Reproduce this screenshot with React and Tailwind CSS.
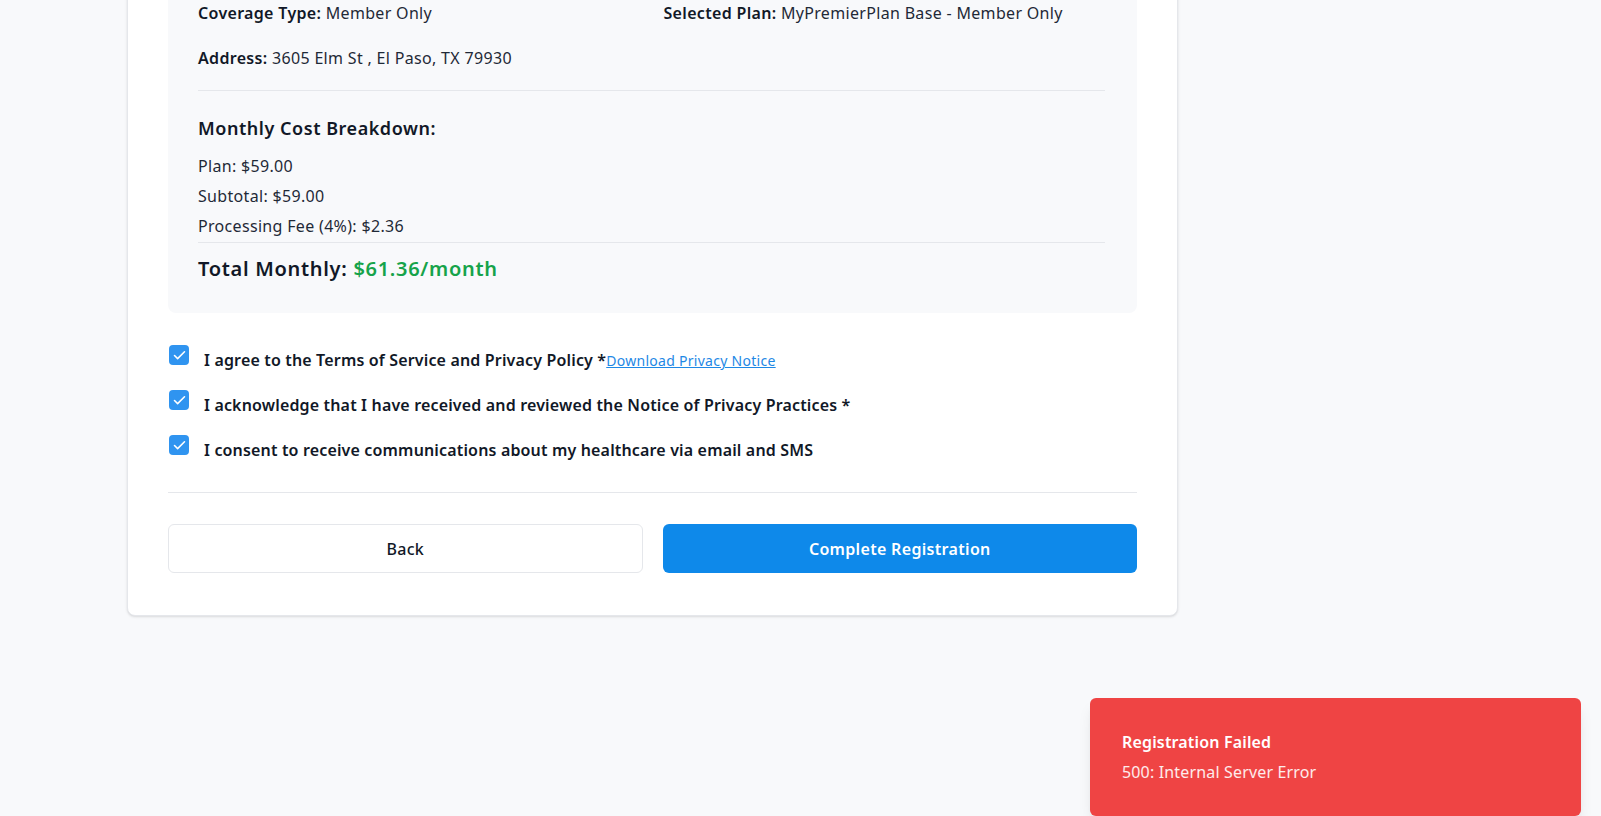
import { Check } from 'lucide-react'

const font = { fontFamily: '"Noto Sans", "Open Sans", Arial, sans-serif' }

function InfoRow({ label, value }) {
  return (
    <p className="leading-6 text-[#1f2937]">
      <span className="font-semibold text-[#111827]">{label}:</span> {value}
    </p>
  )
}

function Consent({ children }) {
  return (
    <label className="flex items-start gap-[15px]">
      <span className="ml-px flex h-5 w-5 shrink-0 items-center justify-center rounded-[4px] bg-[#2f94f0]">
        <Check size={15} strokeWidth={2.5} className="text-white" />
      </span>
      <span className="mt-[3px] leading-6 font-semibold tracking-[0.01em] text-[#111827]">{children}</span>
    </label>
  )
}

export default function App() {
  const costs = [
    { label: 'Plan', value: '$59.00' },
    { label: 'Subtotal', value: '$59.00' },
    { label: 'Processing Fee (4%)', value: '$2.36' },
  ]

  return (
    <div className="relative h-[816px] overflow-hidden bg-[#f8f9fb] text-base tracking-[0.02em]" style={font}>
      <div className="pl-[127px]">
        {/* Review card, scrolled so its top sits above the window */}
        <div className="-mt-[72px] w-[1051px] rounded-lg border border-gray-200 bg-white px-10 pt-10 pb-[42px] shadow-sm">
          <div className="rounded-lg bg-[#f8f9fb] pt-8 pr-8 pb-[30px] pl-[30px]">
            <div className="grid grid-cols-2 gap-x-6 gap-y-[21px]">
              <InfoRow label="Coverage Type" value="Member Only" />
              <InfoRow label="Selected Plan" value="MyPremierPlan Base - Member Only" />
              <InfoRow label="Address" value="3605 Elm St , El Paso, TX 79930" />
            </div>

            <div className="mt-5 border-t border-gray-200 pt-[23px]">
              <h3 className="mb-3 text-lg leading-7 font-semibold tracking-[0.03em] text-[#111827]">Monthly Cost Breakdown:</h3>
              <div className="space-y-1.5 text-[#1f2937]">
                {costs.map(c => (
                  <p key={c.label} className="leading-6">{c.label}: {c.value}</p>
                ))}
              </div>
              <div className="mt-1 border-t border-gray-200 pt-3">
                <p className="text-xl leading-7 font-semibold tracking-[0.035em] text-[#111827]">
                  Total Monthly: <span className="text-[#16a34a]">$61.36/month</span>
                </p>
              </div>
            </div>
          </div>

          <div className="mt-8 space-y-[18px]">
            <Consent>
              I agree to the Terms of Service and Privacy Policy *
              <a href="#" className="text-sm font-normal tracking-[0.02em] text-[#1e88e5] underline">Download Privacy Notice</a>
            </Consent>
            <Consent>I acknowledge that I have received and reviewed the Notice of Privacy Practices *</Consent>
            <Consent>I consent to receive communications about my healthcare via email and SMS</Consent>
          </div>

          <div className="mt-[30px] grid grid-cols-2 gap-5 border-t border-gray-200 pt-[31px]">
            <button className="h-[49px] rounded-md border border-gray-200 bg-white font-medium text-[#111827]">Back</button>
            <button className="h-[49px] rounded-md bg-[#0e89ea] font-semibold text-white">Complete Registration</button>
          </div>
        </div>
      </div>

      {/* Error toast */}
      <div className="absolute right-5 bottom-0 w-[491px] rounded-md bg-[#ef4444] px-8 py-8 tracking-[0.01em] shadow-lg">
        <p className="leading-6 font-semibold text-white">Registration Failed</p>
        <p className="mt-1.5 leading-6 text-white/90">500: Internal Server Error</p>
      </div>
    </div>
  )
}
